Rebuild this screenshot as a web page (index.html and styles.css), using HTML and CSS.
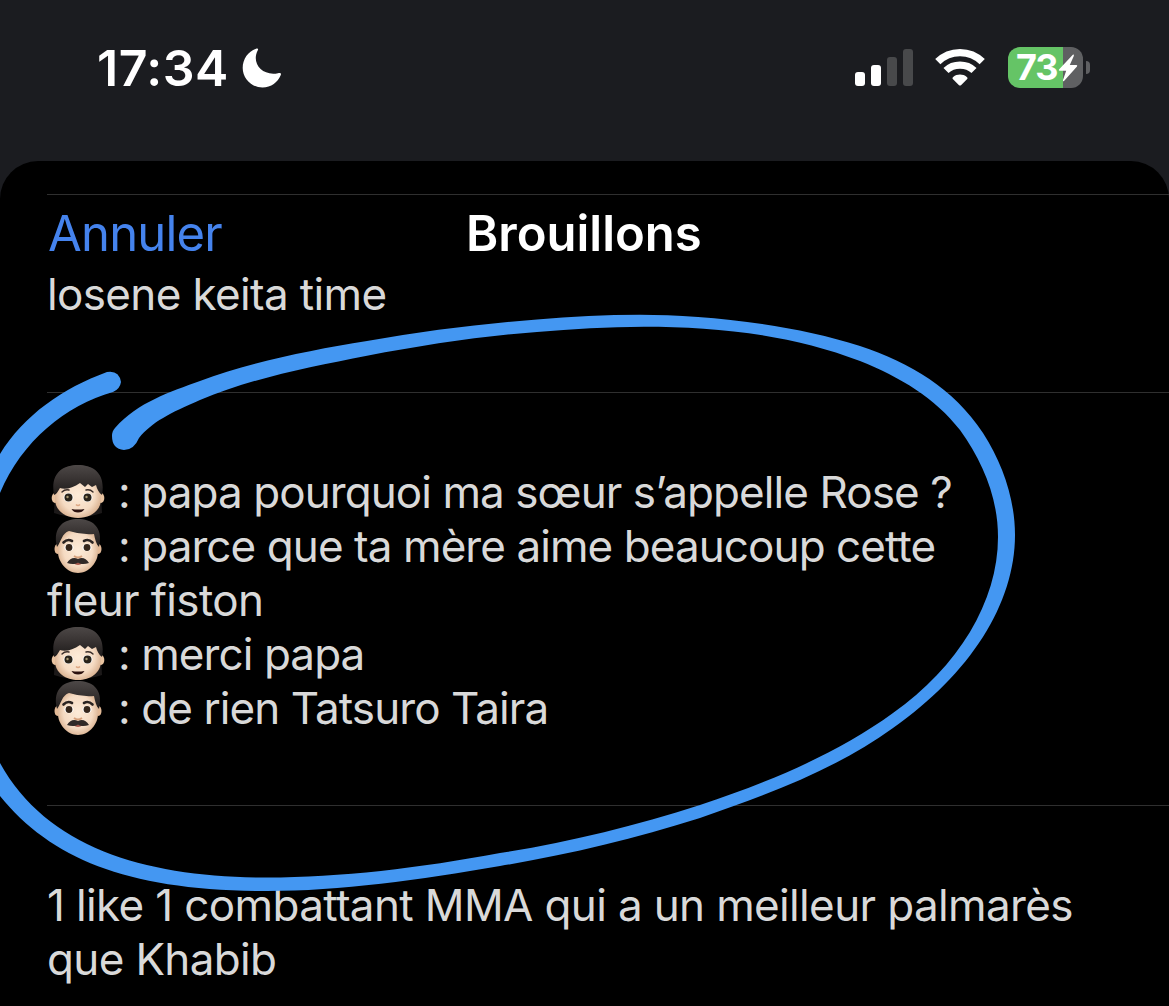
FILE: index.html
```
<!DOCTYPE html>
<html lang="fr">
<head>
  <meta charset="UTF-8">
  <meta name="viewport" content="width=device-width, initial-scale=1.0">
  <title>Brouillons</title>
  <link rel="stylesheet" href="styles.css">
</head>
<body>
  <svg class="defs" width="0" height="0">
    <defs>
      <radialGradient id="skin" cx=".5" cy=".5" r=".6">
        <stop offset="0" stop-color="#fdebd8"/>
        <stop offset=".6" stop-color="#f5dbc3"/>
        <stop offset="1" stop-color="#cfa17c"/>
      </radialGradient>
      <linearGradient id="hair" x1="0" y1="0" x2="0" y2="1">
        <stop offset="0" stop-color="#4d4847"/>
        <stop offset=".45" stop-color="#393433"/>
        <stop offset="1" stop-color="#1d1a1a"/>
      </linearGradient>
      <symbol id="boy" viewBox="0 0 54 56">
        <path d="M4 30C-1 9 13 1 27 1s28 8 23 29l1 19q-24 8-48 0z" fill="#1c1919"/>
        <ellipse cx="4" cy="34" rx="3.3" ry="5" fill="#e9c3a0"/>
        <ellipse cx="50" cy="34" rx="3.3" ry="5" fill="#e9c3a0"/>
        <path d="M4 27C4 12 14 8 27 8s23 4 23 19v8c0 12-11 19-23 19S4 47 4 35z" fill="url(#skin)"/>
        <path d="M3 31C-1 9 12 1 27 1s28 8 24 30c-3-2-5-6-6-10l-4 2-4-3-3 3-5-4c-7 5-15 7-20 5-2 3-3 6-6 7z" fill="url(#hair)"/>
        <path d="M11 28q3-3 7-2M35 26q4-1 7 2" fill="none" stroke="#3a2e2a" stroke-width="1.4" stroke-linecap="round"/>
        <ellipse cx="17.500" cy="33.500" rx="5" ry="4.600" fill="#fff"/>
        <ellipse cx="36.500" cy="33.500" rx="5" ry="4.600" fill="#fff"/>
        <circle cx="17.500" cy="33.500" r="4" fill="#29231a"/>
        <circle cx="36.500" cy="33.500" r="4" fill="#29231a"/>
        <circle cx="16.500" cy="33" r="1.200" fill="#a89972"/>
        <circle cx="35.500" cy="33" r="1.200" fill="#a89972"/>
        <path d="M25 40.500q2 2 4 0" fill="none" stroke="#dda783" stroke-width="1.500"/>
        <path d="M20.500 45q6.500 1 13 0-2 3.500-6.500 3.500t-6.500-3.500z" fill="#2a100e"/>
      </symbol>
      <symbol id="man" viewBox="0 0 54 56">
        <ellipse cx="6.500" cy="31" rx="3" ry="5" fill="#e3b996"/>
        <ellipse cx="47.500" cy="31" rx="3" ry="5" fill="#e3b996"/>
        <path d="M7 22C8 12 17 9 27 9s19 3 20 13v12c0 10-9 21-20 21S7 44 7 34z" fill="url(#skin)"/>
        <path d="M6 29C1 8 14 1 27 1s26 7 21 28c-3-3-4-8-5-13q-13 1-25-3c-7 2-8 11-12 16z" fill="url(#hair)"/>
        <path d="M12.500 24.500q4-4 8.500-1.500M33 23q4.500-2.500 8.500 1.500" fill="none" stroke="#2b2422" stroke-width="2.600" stroke-linecap="round"/>
        <ellipse cx="18" cy="29.500" rx="4.600" ry="3.800" fill="#fff"/>
        <ellipse cx="36" cy="29.500" rx="4.600" ry="3.800" fill="#fff"/>
        <circle cx="18" cy="29.500" r="3.400" fill="#35261b"/>
        <circle cx="36" cy="29.500" r="3.400" fill="#35261b"/>
        <path d="M23 38q4 3 8 0" fill="none" stroke="#d6a17c" stroke-width="2"/>
        <path d="M23 45h8q-1 2-4 2t-4-2z" fill="#a8584c"/>
        <path d="M27 41c4-2 8-1 11 4-4 1.500-8 1.500-11-.2-3 1.700-7 1.700-11 .2 3-5 7-6 11-4z" fill="#302927"/>
      </symbol>
    </defs>
  </svg>

  <header class="status-bar">
    <div class="status-left">
      <span class="time">17:34</span>
      <svg class="moon" viewBox="0 0 40 40" width="40" height="40">
        <path d="M14 .7C16 0 16.500.8 15.800 2.300 9 15 20 28.500 36 25.200c2-.7 3.500-.2 2.800 1.800C36 34 29 39.500 20.500 39.500 9.500 39.500.7 30.500.7 20 .7 11 6 3.500 14 .7z" fill="#fff"/>
      </svg>
    </div>
    <div class="status-right">
      <svg class="signal" viewBox="0 0 60 40" width="60" height="40">
        <rect x="0" y="24" width="10" height="14" rx="3" fill="#fff"/>
        <rect x="16" y="17" width="10" height="21" rx="3" fill="#fff"/>
        <rect x="32" y="9" width="10" height="29" rx="3" fill="#48494b"/>
        <rect x="48" y="1" width="10" height="37" rx="3" fill="#48494b"/>
      </svg>
      <svg class="wifi" viewBox="0 0 50 38" width="50" height="38">
        <g fill="none" stroke="#fff">
          <path d="M2.800 13.700C15 1.600 35 1.600 47.200 13.700" stroke-width="7.400"/>
          <path d="M11 22.500C18.500 15.200 31.500 15.200 39 22.500" stroke-width="7.200"/>
        </g>
        <path d="M17.800 31q-1-1 .4-2c4-3.200 9.600-3.200 13.600 0q1.400 1 .4 2l-6.200 6.200q-1 .8-2 0z" fill="#fff"/>
      </svg>
      <div class="battery">
        <div class="battery-body">
          <span class="battery-level">73</span>
          <svg class="bolt" viewBox="0 0 20 28" width="20" height="28">
            <path d="M14.800.7 1 15.500q-.7 1 .5 1.200h6.700L5 26q-.3 1.700 1 1L19 12.500q.8-1.200-.6-1.500h-6.600l4-9q.5-2-1-1.300z" fill="#fff"/>
          </svg>
        </div>
        <div class="battery-tip"></div>
      </div>
    </div>
  </header>

  <main class="sheet">
    <nav class="sheet-nav">
      <a class="cancel">Annuler</a>
      <h1 class="title">Brouillons</h1>
    </nav>

    <ul class="drafts">
      <li class="draft draft-first">
        <p class="line">losene keita time</p>
      </li>
      <li class="draft draft-talk">
        <p class="line"><svg class="emoji"><use href="#boy"/></svg><span class="speech">: papa pourquoi ma sœur s’appelle Rose ?</span></p>
        <p class="line"><svg class="emoji"><use href="#man"/></svg><span class="speech">: parce que ta mère aime beaucoup cette</span></p>
        <p class="line">fleur fiston</p>
        <p class="line"><svg class="emoji"><use href="#boy"/></svg><span class="speech">: merci papa</span></p>
        <p class="line"><svg class="emoji"><use href="#man"/></svg><span class="speech">: de rien Tatsuro Taira</span></p>
      </li>
      <li class="draft draft-last">
        <p class="line">1 like 1 combattant MMA qui a un meilleur palmarès</p>
        <p class="line">que Khabib</p>
      </li>
    </ul>
  </main>

  <!-- hand-drawn ring over the second draft -->
  <svg class="marker" viewBox="0 0 1169 1006" width="1169" height="1006">
    <path d="M112 436Q112 431 115 428C138 402 170 392 200 381C248 363 310 350 367 341C424 331 480 324 537 319.500C571 316.500 606 314.700 640 314.700C700 314.700 790 323 860 346C911 363 953 388 983 433C1003 464 1015 500 1015 535C1015 604 970 674 893 728C838 768 770 794 700 818C634 839 566 855 500 866C420 880 340 891 267 891C130 891 52 860 0 796L-20 760L-10 740L0 763C48 850 150 877.500 267 877.500C340 877.500 420 868 500 853C566 843 634 826 700 805C770 782 838 753 893 713C958 667 998 602 998 537C998 498 983 462 960 430C935 398 900 377 860 361C790 334 715 326.700 644 326.700C608 326.700 572 329 537 332C480 336 424 345 367 355.700C310 367 252 378 200 400C170 413 152 422 139 438Q134 450 124 450Q112 449 112 436Z"/>
    <path d="M-6 466L0 454C24 415 63 388 107 372Q119 370 121 382Q120 389 113 392C66 405 22 441 0 493L-20 530Z"/>
  </svg>
</body>
</html>
```
FILE: styles.css
```
* {
  box-sizing: border-box;
}

body {
  margin: 0;
  width: 1169px;
  height: 1006px;
  overflow: hidden;
  position: relative;
  background-color: #1b1c20;
  font-family: Inter, "Liberation Sans", sans-serif;
  color: #d9d9d9;
}

.defs {
  position: absolute;
}

.status-bar {
  height: 161px;
  padding: 47px 79px 0 97px;
  display: flex;
  justify-content: space-between;
  align-items: flex-start;
}

.status-left,
.status-right {
  display: flex;
  align-items: flex-start;
  color: #fff;
}

.time {
  width: 145px;
  font-size: 50px;
  line-height: 42px;
  font-weight: 600;
  letter-spacing: 0.5px;
}

.moon {
  margin-top: 1px;
}

.signal {
  margin: 1px 20px 0 0;
}

.wifi {
  margin: 1px 23px 0 0;
}

.battery {
  display: flex;
  align-items: center;
  gap: 3px;
}

.battery-body {
  display: flex;
  align-items: center;
  width: 75px;
  height: 41px;
  padding-left: 8px;
  border-radius: 12px;
  background: linear-gradient(to right, #65c466 55px, #5f6062 55px);
}

.battery-level {
  width: 42px;
  font-size: 36px;
  font-weight: 700;
  line-height: 41px;
  letter-spacing: -1.2px;
}

.battery-tip {
  width: 4px;
  height: 13px;
  border-radius: 0 4px 4px 0;
  background-color: #5f6062;
}

.sheet {
  height: 845px;
  padding-top: 33px;
  border-radius: 38px 38px 0 0;
  background-color: #000;
}

.sheet-nav {
  display: grid;
  grid-template-columns: 419px 1fr;
  height: 73px;
  margin-left: 47px;
  padding-top: 9px;
  border-top: 1px solid #2f2f2f;
}

.cancel {
  padding-left: 1px;
  font-size: 49px;
  line-height: 60px;
  letter-spacing: -0.8px;
  color: #4583ed;
}

.title {
  margin: 0;
  font-size: 49px;
  line-height: 60px;
  font-weight: 600;
  color: #fff;
}

.drafts {
  list-style: none;
  margin: 0 0 0 47px;
  padding: 0;
}

.draft {
  border-bottom: 1px solid #2f2f2f;
}

.draft-first {
  height: 126px;
}

.draft-talk {
  height: 413px;
  padding-top: 72px;
}

.draft-last {
  padding-top: 72px;
  border: 0;
}

.line {
  display: flex;
  align-items: center;
  height: 54px;
  margin: 0;
  font-size: 44px;
  font-weight: 400;
  line-height: 54px;
  letter-spacing: -0.64px;
  white-space: nowrap;
}

.speech {
  letter-spacing: -0.92px;
}

.emoji {
  width: 54px;
  height: 56px;
  margin: 0 13px 0 4px;
  flex: none;
}

.marker {
  position: absolute;
  top: 0;
  left: 0;
  fill: #4497f2;
}
```
